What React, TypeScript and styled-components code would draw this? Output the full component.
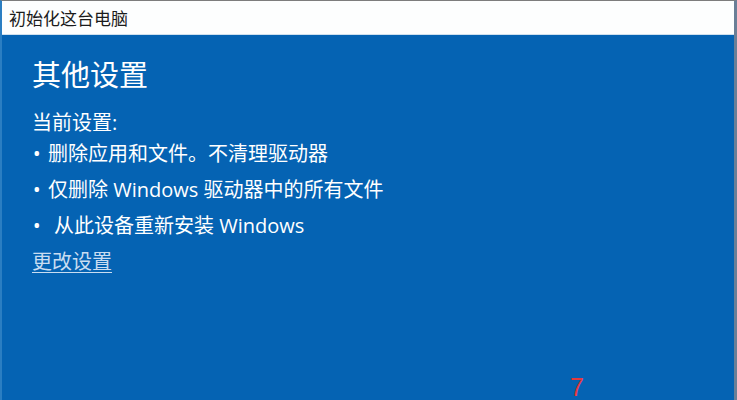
import React from "react";
import styled, { createGlobalStyle } from "styled-components";

const GlobalStyle = createGlobalStyle`
  html, body {
    margin: 0;
    padding: 0;
    background: #ffffff;
  }
  #root {
    width: 737px;
    height: 400px;
  }
`;

const CJK = `"Open Sans", "Noto Sans CJK SC", sans-serif`;

const Window = styled.div`
  position: relative;
  display: flex;
  flex-direction: column;
  width: 737px;
  height: 400px;
  box-sizing: border-box;
  border-top: 1px solid #7d7d7d;
  border-right: 3px solid #6a7f97;
  border-left: 2px solid #2b7ec2;
  background: #0563b3;
  overflow: hidden;
  font-family: ${CJK};
`;

const TitleBar = styled.div`
  display: flex;
  align-items: center;
  height: 33px;
  padding-left: 7px;
  background: #fdfefe;
  border-bottom: 1px solid #cfe0ee;
  color: #1b1b1b;
  font-size: 17px;
`;

const Content = styled.div`
  flex: 1;
  display: flex;
  flex-direction: column;
  padding: 20px 0 0 30px;
  color: #ffffff;
`;

const Heading = styled.h1`
  margin: 0;
  font-size: 29px;
  font-weight: 400;
  line-height: 40px;
`;

const Label = styled.div`
  margin-top: 14px;
  font-size: 20px;
  line-height: 28px;
`;

const Items = styled.ul`
  list-style: none;
  margin: 3px 0 0;
  padding: 0;
  display: flex;
  flex-direction: column;
  gap: 8px;
`;

const Item = styled.li<{ wide?: boolean }>`
  display: flex;
  font-size: 20px;
  line-height: 28px;
  &::before {
    content: "•";
    flex: none;
    width: ${({ wide }) => (wide ? "21px" : "15px")};
    padding-left: 1px;
    font-family: "Noto Sans", sans-serif;
    font-size: 20px;
  }
`;

const ChangeLink = styled.a`
  align-self: flex-start;
  margin-top: 8px;
  font-size: 20px;
  line-height: 28px;
  color: #c9ddf1;
  text-decoration: underline;
  text-underline-offset: 3px;
  text-decoration-thickness: 1px;
`;

const Marker = styled.span`
  position: absolute;
  left: 568px;
  top: 372px;
  color: #e33a3f;
  font-family: "Liberation Sans", sans-serif;
  font-size: 25px;
  font-weight: 300;
`;

const App: React.FC = () => {
  return (
    <Window>
      <GlobalStyle />
      <TitleBar>初始化这台电脑</TitleBar>
      <Content>
        <Heading>其他设置</Heading>
        <Label>当前设置:</Label>
        <Items>
          <Item>删除应用和文件。不清理驱动器</Item>
          <Item>仅删除 Windows 驱动器中的所有文件</Item>
          <Item wide>从此设备重新安装 Windows</Item>
        </Items>
        <ChangeLink href="#">更改设置</ChangeLink>
      </Content>
      <Marker>7</Marker>
    </Window>
  );
};

export default App;
